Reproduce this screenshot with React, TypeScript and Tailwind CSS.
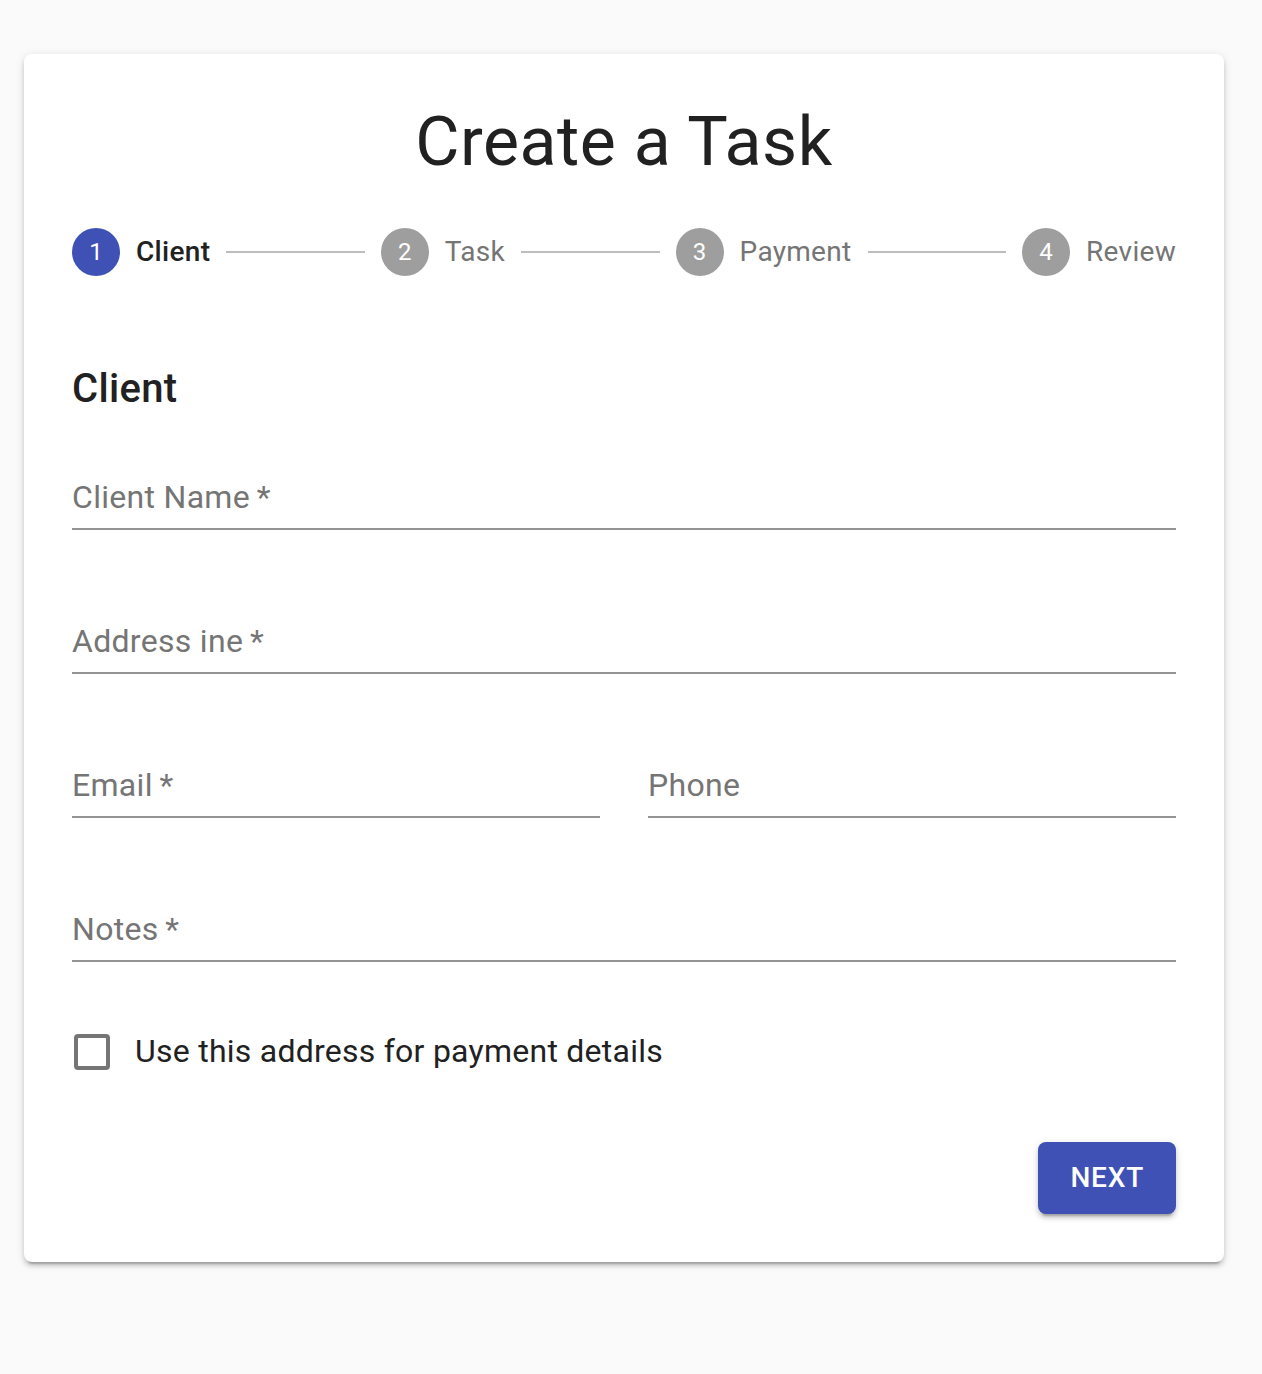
import React from "react";

const steps = ["Client", "Task", "Payment", "Review"];

function Field({ label, className = "" }: { label: string; className?: string }) {
  return (
    <div className={`flex h-[48px] items-start border-b-2 border-[#949494] ${className}`}>
      <span className="text-[32px] leading-[30px] tracking-[0.3px] text-[#757575]">{label}</span>
    </div>
  );
}

export default function App() {
  return (
    <div className="min-h-[1374px] bg-[#fafafa] pt-[54px] px-[24px] font-['Roboto',sans-serif] text-[#212121]">
      <div className="w-[1200px] rounded-[8px] bg-white p-[48px] shadow-[0_6px_2px_-4px_rgba(0,0,0,0.2),0_4px_4px_0_rgba(0,0,0,0.14),0_2px_10px_0_rgba(0,0,0,0.12)]">
        <h1 className="text-center text-[68px] leading-[80px] tracking-[0.5px] font-normal text-[#212121]">Create a Task</h1>

        <div className="mt-[46px] flex h-[48px] items-center">
          {steps.map((s, i) => (
            <React.Fragment key={s}>
              <div className="flex items-center gap-[16px]">
                <div
                  className={`flex h-[48px] w-[48px] items-center justify-center rounded-full text-[24px] text-white ${
                    i === 0 ? "bg-[#3f51b5]" : "bg-[#9e9e9e]"
                  }`}
                >
                  {i + 1}
                </div>
                <span
                  className={`text-[28px] leading-[32px] tracking-[0.3px] ${
                    i === 0 ? "font-medium text-[#212121]" : "text-[#757575]"
                  }`}
                >
                  {s}
                </span>
              </div>
              {i < steps.length - 1 && <div className="mx-[16px] h-[2px] flex-1 bg-[#bdbdbd]" />}
            </React.Fragment>
          ))}
        </div>

        <h2 className="mt-[89px] text-[40px] leading-[48px] font-medium tracking-[0.3px] text-[#212121]">Client</h2>

        <div className="mt-[69px] flex flex-col gap-[96px]">
          <Field label={"Client Name\u2009*"} />
          <Field label={"Address ine\u2009*"} />
          <div className="flex gap-[48px]">
            <Field label={"Email\u2009*"} className="flex-1" />
            <Field label="Phone" className="flex-1" />
          </div>
          <Field label={"Notes\u2009*"} />
        </div>

        <div className="mt-[66px] flex h-[48px] items-center">
          <div className="ml-[2px] h-[36px] w-[36px] rounded-[4px] border-[4px] border-[#757575]" />
          <span className="ml-[25px] -mt-[2px] text-[32px] leading-[48px] tracking-[0.25px] text-[#212121]">
            Use this address for payment details
          </span>
        </div>

        <div className="mt-[66px] flex justify-end">
          <button className="h-[72px] rounded-[8px] bg-[#3f51b5] px-[32px] text-[28px] font-medium tracking-[0.8px] text-white shadow-[0_6px_2px_-4px_rgba(0,0,0,0.2),0_4px_4px_0_rgba(0,0,0,0.14),0_2px_10px_0_rgba(0,0,0,0.12)]">
            NEXT
          </button>
        </div>
      </div>
    </div>
  );
}
